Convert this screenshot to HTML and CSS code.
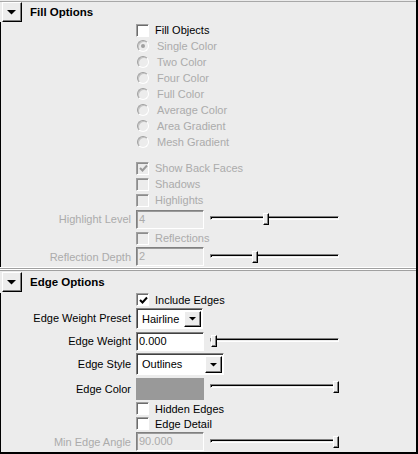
FILE: index.html
```html
<!DOCTYPE html>
<html>
<head>
<meta charset="utf-8">
<link rel="stylesheet" href="styles.css">
</head>
<body>
<div class="panel">
  <section class="sec">
    <div class="hdr first">
      <span class="tog"><svg width="10" height="6" viewBox="0 0 10 6"><polygon points="0,0 9,0 4.5,4.5" fill="#000"/></svg></span>
      <span class="title">Fill Options</span>
    </div>
    <div class="body fillbody">
      <div class="row h16"><span></span><span class="opt"><i class="cb"></i>Fill Objects</span></div>
      <div class="row h16"><span></span><span class="opt dis"><i class="rd on"></i>Single Color</span></div>
      <div class="row h16"><span></span><span class="opt dis"><i class="rd"></i>Two Color</span></div>
      <div class="row h16"><span></span><span class="opt dis"><i class="rd"></i>Four Color</span></div>
      <div class="row h16"><span></span><span class="opt dis"><i class="rd"></i>Full Color</span></div>
      <div class="row h16"><span></span><span class="opt dis"><i class="rd"></i>Average Color</span></div>
      <div class="row h16"><span></span><span class="opt dis"><i class="rd"></i>Area Gradient</span></div>
      <div class="row h16"><span></span><span class="opt dis"><i class="rd"></i>Mesh Gradient</span></div>
      <div class="spacer"></div>
      <div class="row h16"><span></span><span class="opt dis"><i class="cb off chk"><svg width="9" height="9" viewBox="0 0 9 9"><polyline points="1,4 3.5,6.5 8,1.5" fill="none" stroke="#9a9a9a" stroke-width="2"/></svg></i>Show Back Faces</span></div>
      <div class="row h16"><span></span><span class="opt dis"><i class="cb off"></i>Shadows</span></div>
      <div class="row h16"><span></span><span class="opt dis"><i class="cb off"></i>Highlights</span></div>
      <div class="row h22"><span class="lbl dis">Highlight Level</span><span class="ctl"><span class="fld off">4</span><span class="sl"><i class="trk"></i><i class="thumb" style="left:53px"></i></span></span></div>
      <div class="row h16"><span></span><span class="opt dis"><i class="cb off"></i>Reflections</span></div>
      <div class="row h21"><span class="lbl dis">Reflection Depth</span><span class="ctl"><span class="fld off">2</span><span class="sl"><i class="trk"></i><i class="thumb" style="left:42px"></i></span></span></div>
    </div>
  </section>
  <div class="divider"></div>
  <section class="sec">
    <div class="hdr">
      <span class="tog"><svg width="10" height="6" viewBox="0 0 10 6"><polygon points="0,0 9,0 4.5,4.5" fill="#000"/></svg></span>
      <span class="title">Edge Options</span>
    </div>
    <div class="body edgebody">
      <div class="row h13"><span></span><span class="opt"><i class="cb chk"><svg width="9" height="9" viewBox="0 0 9 9"><polyline points="1,4 3.5,6.5 8,1.5" fill="none" stroke="#000" stroke-width="2"/></svg></i>Include Edges</span></div>
      <div class="row h24"><span class="lbl">Edge Weight Preset</span><span class="ctl"><span class="dd w67"><span class="txt">Hairline</span><span class="arr"><svg width="8" height="5" viewBox="0 0 8 5"><polygon points="0,0 7,0 3.5,3.5" fill="#000"/></svg></span></span></span></div>
      <div class="row h22"><span class="lbl">Edge Weight</span><span class="ctl"><span class="fld">0.000</span><span class="sl"><i class="trk"></i><i class="thumb" style="left:1px"></i></span></span></div>
      <div class="row h24"><span class="lbl">Edge Style</span><span class="ctl"><span class="dd w88"><span class="txt">Outlines</span><span class="arr"><svg width="8" height="5" viewBox="0 0 8 5"><polygon points="0,0 7,0 3.5,3.5" fill="#000"/></svg></span></span></span></div>
      <div class="row h25"><span class="lbl">Edge Color</span><span class="ctl"><span class="sw"></span><span class="sl up"><i class="trk"></i><i class="thumb" style="left:123px"></i></span></span></div>
      <div class="row h15"><span></span><span class="opt"><i class="cb"></i>Hidden Edges</span></div>
      <div class="row h15"><span></span><span class="opt"><i class="cb"></i>Edge Detail</span></div>
      <div class="row h21"><span class="lbl dis">Min Edge Angle</span><span class="ctl"><span class="fld off">90.000</span><span class="sl"><i class="trk"></i><i class="thumb" style="left:123px"></i></span></span></div>
    </div>
  </section>
</div>
</body>
</html>
```
FILE: styles.css
```css
html, body {
  margin: 0;
  padding: 0;
  background: #ececec;
}
body {
  font-family: "Liberation Sans", Arial, sans-serif;
  font-size: 11px;
  color: #000;
}
.panel {
  width: 418px;
  height: 454px;
  box-sizing: border-box;
  border-right: 2px solid #000;
  border-bottom: 2px solid #000;
  background: #ececec;
  overflow: hidden;
}
.hdr {
  height: 22px;
  box-sizing: border-box;
  padding: 1px 0 0 2px;
  display: flex;
  align-items: flex-start;
}
.hdr.first {
  padding-top: 2px;
  background: linear-gradient(#ececec 0, #ececec 1px, #a8a8a8 1px, #a8a8a8 2px, #ececec 2px);
}
.tog {
  width: 20px;
  height: 20px;
  box-sizing: border-box;
  border: 1px solid;
  border-color: #fff #000 #000 #fff;
  box-shadow: inset -1px -1px 0 #808080;
  background: #ececec;
  display: flex;
  align-items: center;
  justify-content: center;
  padding-top: 1px;
}
.title {
  margin-left: 8px;
  line-height: 20px;
  font-weight: bold;
  font-size: 11.5px;
}
.body {
  border-left: 1px solid #000;
}
.fillbody { height: 245px; }
.edgebody { height: 159px; }
.row {
  display: grid;
  grid-template-columns: 130px 1fr;
  column-gap: 5px;
  align-items: center;
}
.h13 { height: 13px; }
.h15 { height: 15px; }
.h16 { height: 16px; }
.h21 { height: 21px; }
.h22 { height: 22px; }
.h24 { height: 24px; }
.h25 { height: 25px; }
.spacer { height: 10px; }
.lbl {
  text-align: right;
  white-space: nowrap;
}
.dis { color: #ababab; }
.opt {
  display: flex;
  align-items: center;
  gap: 6px;
  white-space: nowrap;
}
.cb {
  width: 13px;
  height: 13px;
  box-sizing: border-box;
  border: 1px solid;
  border-color: #a0a0a0 #fff #fff #a0a0a0;
  box-shadow: inset 1px 1px 0 #6c6c6c;
  background: #fff;
  display: flex;
  align-items: center;
  justify-content: center;
  padding: 1px 0 0 1px;
}
.cb.off {
  background: #ececec;
  box-shadow: inset 1px 1px 0 #8c8c8c;
}
.rd {
  width: 12px;
  height: 12px;
  box-sizing: border-box;
  margin-left: 1px;
  margin-right: 2px;
  border-radius: 50%;
  border: 1px solid;
  border-color: #a0a0a0 #fff #fff #a0a0a0;
  box-shadow: inset 1px 1px 0 #c4c4c4;
  background: #ececec;
  position: relative;
}
.rd.on::after {
  content: "";
  position: absolute;
  left: 3px;
  top: 3px;
  width: 4px;
  height: 4px;
  border-radius: 50%;
  background: #a0a0a0;
}
.ctl {
  display: flex;
  align-items: center;
  gap: 6px;
}
.fld {
  width: 68px;
  height: 19px;
  box-sizing: border-box;
  border: 1px solid;
  border-color: #808080 #fff #fff #808080;
  box-shadow: inset 1px 1px 0 #404040;
  background: #fff;
  padding-left: 2px;
  line-height: 17px;
}
.fld.off {
  background: #ececec;
  box-shadow: inset 1px 1px 0 #9a9a9a;
  color: #ababab;
}
.dd {
  display: flex;
  box-sizing: border-box;
  border: 1px solid;
  border-color: #808080 #fff #fff #808080;
  box-shadow: inset 1px 1px 0 #404040;
  background: #fff;
  padding: 2px 1px 1px 2px;
}
.w67 { width: 67px; height: 21px; }
.w88 { width: 88px; height: 22px; }
.dd .txt {
  flex: 1;
  padding-left: 3px;
  line-height: 16px;
}
.dd .arr {
  width: 17px;
  box-sizing: border-box;
  border: 1px solid;
  border-color: #fff #000 #000 #fff;
  box-shadow: inset -1px -1px 0 #808080;
  background: #ececec;
  display: flex;
  align-items: center;
  justify-content: center;
  padding-top: 1px;
}
.sw {
  width: 68px;
  height: 22px;
  background: #999;
}
.sl {
  position: relative;
  display: block;
  width: 129px;
  height: 12px;
}
.sl.up { margin-top: -3px; }
.trk {
  position: absolute;
  left: 0;
  right: 0;
  top: 3px;
  height: 4px;
  box-sizing: border-box;
  border-top: 1px solid #808080;
  border-left: 1px solid #808080;
  border-bottom: 1px solid #fff;
  border-right: 1px solid #fff;
  box-shadow: inset 1px 1px 0 #000;
}
.thumb {
  position: absolute;
  top: 0;
  width: 6px;
  height: 12px;
  box-sizing: border-box;
  border: 1px solid;
  border-color: #fff #000 #000 #fff;
  box-shadow: inset -1px -1px 0 #808080;
  background: #ececec;
}
.divider {
  height: 4px;
  background: linear-gradient(#fff 0, #fff 1px, #a0a0a0 1px, #a0a0a0 2px, #fff 2px, #fff 3px, #a0a0a0 3px);
}
```
